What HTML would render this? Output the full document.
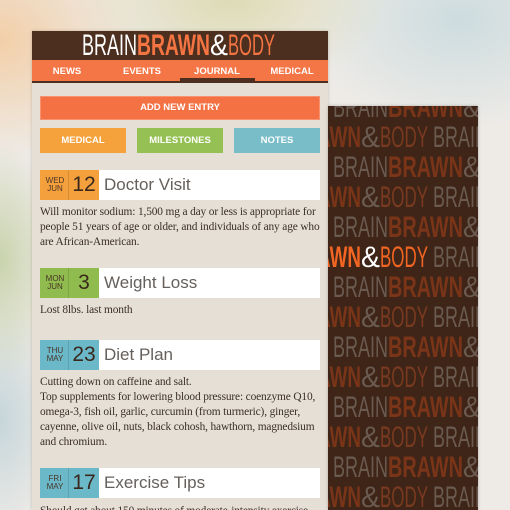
<!DOCTYPE html>
<html><head><meta charset="utf-8"><style>
*{margin:0;padding:0;box-sizing:border-box}
html,body{width:510px;height:510px;overflow:hidden}
body{position:relative;font-family:"Liberation Sans",sans-serif;
background:
radial-gradient(ellipse 140px 120px at 0px 40px,#f2cfa8 0%,rgba(242,207,168,0) 100%),
radial-gradient(ellipse 160px 90px at 230px 0px,#dedbb5 0%,rgba(222,219,181,0) 100%),
radial-gradient(ellipse 160px 110px at 460px 20px,#cddcdf 0%,rgba(205,220,223,0) 100%),
radial-gradient(ellipse 60px 120px at 0px 260px,#c9d3ad 0%,rgba(201,211,173,0) 100%),
radial-gradient(ellipse 60px 120px at 0px 420px,#c6d6da 0%,rgba(198,214,218,0) 100%),
#eeebe7;}
.ph{position:absolute;left:32px;top:31px;width:296px;height:479px;background:#e6dfd6;box-shadow:0 0 3px rgba(120,100,80,.35)}
.hdr{position:absolute;left:32px;top:31px;width:296px;height:29px;background:#4d2f1f}
.nav{position:absolute;left:32px;top:60px;width:296px;height:23px;background:#f47545;border-bottom:2px solid #4d2f1f}
.nav span{position:absolute;top:6px;color:#fff;font-weight:bold;font-size:9.5px;transform:translateX(-50%)}
.bar{position:absolute;left:180px;top:78px;width:75px;height:3px;background:#4d2f1f}
.btn{position:absolute;color:#fff;font-weight:bold;font-size:9.5px;text-align:center}
.h{position:absolute;left:40px;width:280px;height:30px;background:#fff}
.d{position:absolute;left:0;top:0;width:59px;height:30px}
.d .dn{position:absolute;left:2px;width:26px;top:7px;font-size:8px;line-height:8px;text-align:center;color:#4a3426}
.d .ln{position:absolute;left:28px;top:0;width:1px;height:30px;background:rgba(0,0,0,.12)}
.d .num{position:absolute;left:29px;width:30px;top:3px;font-size:21px;text-align:center;color:#3a281d}
.h .t{position:absolute;left:64px;top:5px;font-size:17px;color:#66605c}
.tx{position:absolute;left:40px;width:284px;font-family:"Liberation Serif",serif;font-size:11.4px;letter-spacing:-0.15px;line-height:15px;color:#3b2f28}
</style></head><body>
<div class="ph"></div>
<div class="hdr"></div>
<svg style="position:absolute;left:0;top:0" width="510" height="70">
<g font-family="Liberation Sans, sans-serif" font-size="30">
<text x="82" y="55" textLength="55" lengthAdjust="spacingAndGlyphs" fill="#fff">BRAIN</text>
<text x="137" y="55" textLength="73" lengthAdjust="spacingAndGlyphs" fill="#f47442" font-weight="bold">BRAWN</text>
<text x="210" y="55" textLength="18" lengthAdjust="spacingAndGlyphs" fill="#fff">&amp;</text>
<text x="228" y="55" textLength="47" lengthAdjust="spacingAndGlyphs" fill="#f47442">BODY</text>
</g></svg>
<div class="nav"><span style="left:35px">NEWS</span><span style="left:110px">EVENTS</span><span style="left:185px">JOURNAL</span><span style="left:260px">MEDICAL</span></div>
<div class="bar"></div>
<div class="btn" style="left:40px;top:96px;width:280px;height:24px;line-height:22px;background:#f47144;border:1px solid #f89270">ADD NEW ENTRY</div>
<div class="btn" style="left:40px;top:128px;width:86px;height:25px;line-height:25px;background:#f5a23d">MEDICAL</div>
<div class="btn" style="left:137px;top:128px;width:86px;height:25px;line-height:25px;background:#95c053">MILESTONES</div>
<div class="btn" style="left:234px;top:128px;width:86px;height:25px;line-height:25px;background:#79bdc9">NOTES</div>

<div class="h" style="top:170px"><div class="d" style="background:#f4a03c"><div class="dn">WED<br>JUN</div><div class="ln"></div><div class="num">12</div></div><div class="t">Doctor Visit</div></div>
<div class="tx" style="top:205px">Will monitor sodium: 1,500 mg a day or less is appropriate for people 51 years of age or older, and individuals of any age who are African-American.</div>

<div class="h" style="top:268px"><div class="d" style="background:#8fbb4f"><div class="dn">MON<br>JUN</div><div class="ln"></div><div class="num">3</div></div><div class="t">Weight Loss</div></div>
<div class="tx" style="top:303px">Lost 8lbs. last month</div>

<div class="h" style="top:340px"><div class="d" style="background:#6bb8c8"><div class="dn">THU<br>MAY</div><div class="ln"></div><div class="num">23</div></div><div class="t">Diet Plan</div></div>
<div class="tx" style="top:375px">Cutting down on caffeine and salt.<br>Top supplements for lowering blood pressure: coenzyme Q10, omega-3, fish oil, garlic, curcumin (from turmeric), ginger, cayenne, olive oil, nuts, black cohosh, hawthorn, magnedsium and chromium.</div>

<div class="h" style="top:468px"><div class="d" style="background:#6bb8c8"><div class="dn">FRI<br>MAY</div><div class="ln"></div><div class="num">17</div></div><div class="t">Exercise Tips</div></div>
<div class="tx" style="top:504px;height:6px;overflow:hidden;white-space:nowrap">Should get about 150 minutes of moderate-intensity exercise</div>

<svg style="position:absolute;left:328px;top:106px;box-shadow:0 0 3px rgba(0,0,0,.25)" width="150" height="404">
<rect width="150" height="404" fill="#3e2518"/>
<defs>
<g id="ra" font-family="Liberation Sans, sans-serif" font-size="30">
<text x="5" y="0" textLength="55" lengthAdjust="spacingAndGlyphs" fill="#6b5a50">BRAIN</text>
<text x="60" y="0" textLength="75" lengthAdjust="spacingAndGlyphs" fill="#7a3518" font-weight="bold">BRAWN</text>
<text x="135" y="0" textLength="18" lengthAdjust="spacingAndGlyphs" fill="#6b5a50">&amp;</text>
</g>
<g id="rb" font-family="Liberation Sans, sans-serif" font-size="30">
<text x="-38" y="0" textLength="71" lengthAdjust="spacingAndGlyphs" fill="#7a3518" font-weight="bold">BRAWN</text>
<text x="33" y="0" textLength="19" lengthAdjust="spacingAndGlyphs" fill="#6b5a50">&amp;</text>
<text x="52" y="0" textLength="48" lengthAdjust="spacingAndGlyphs" fill="#7a3a1f">BODY</text>
<text x="105" y="0" textLength="55" lengthAdjust="spacingAndGlyphs" fill="#6b5a50">BRAIN</text>
</g>
</defs>
<use href="#ra" y="11"/><use href="#rb" y="41"/><use href="#ra" y="71"/><use href="#rb" y="101"/><use href="#ra" y="131"/>
<g font-family="Liberation Sans, sans-serif" font-size="30">
<text x="-38" y="161" textLength="71" lengthAdjust="spacingAndGlyphs" fill="#f26522" font-weight="bold">BRAWN</text>
<text x="33" y="161" textLength="19" lengthAdjust="spacingAndGlyphs" fill="#fff">&amp;</text>
<text x="52" y="161" textLength="48" lengthAdjust="spacingAndGlyphs" fill="#f26522">BODY</text>
<text x="105" y="161" textLength="55" lengthAdjust="spacingAndGlyphs" fill="#6b5a50">BRAIN</text>
</g>
<use href="#ra" y="191"/><use href="#rb" y="221"/><use href="#ra" y="251"/><use href="#rb" y="281"/><use href="#ra" y="311"/><use href="#rb" y="341"/><use href="#ra" y="371"/><use href="#rb" y="401"/>
</svg>
</body></html>
